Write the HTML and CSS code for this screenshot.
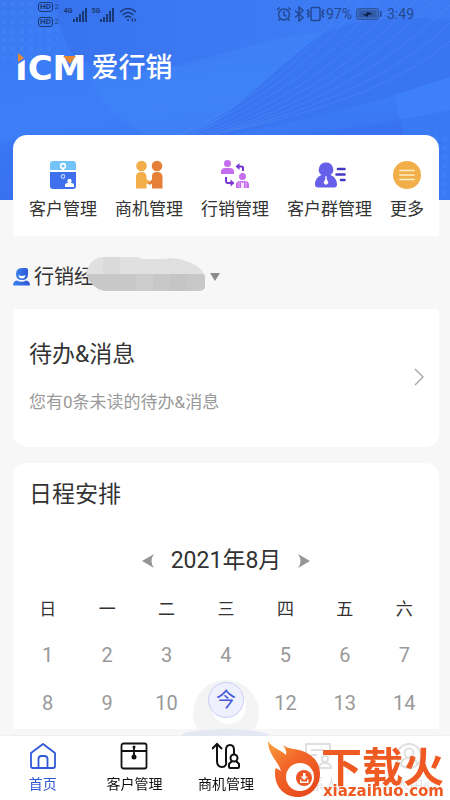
FILE: index.html
```html
<!DOCTYPE html>
<html lang="zh-CN">
<head>
<meta charset="utf-8">
<meta name="viewport" content="width=device-width, initial-scale=1">
<title>爱行销</title>
<link rel="stylesheet" href="styles.css">
</head>
<body>
<div class="app">
  <header class="hero">
    <svg class="hero-art" viewBox="0 0 450 200" preserveAspectRatio="xMidYMid slice" aria-hidden="true">
      <defs>
        <linearGradient id="sky" x1="0" y1="0" x2="0.3" y2="1"><stop offset="0" stop-color="#3a79f2"/><stop offset="0.6" stop-color="#3c7ff7"/><stop offset="1" stop-color="#386ff0"/></linearGradient>
        <linearGradient id="band" x1="0" y1="0" x2="1" y2="0"><stop offset="0" stop-color="#3873ee"/><stop offset="1" stop-color="#3d7cf5"/></linearGradient>
        <pattern id="dots" width="9" height="9" patternUnits="userSpaceOnUse"><circle cx="4" cy="4" r="2" fill="#4b8cf8" opacity=".35"/></pattern>
      </defs>
      <rect width="450" height="200" fill="url(#sky)"/>
      <path d="M50 0H270L322 34C240 60 130 85 76 58C62 42 60 20 50 0Z" fill="url(#band)"/>
      <path d="M90 78C180 76 270 30 322 34C260 80 235 116 165 142C130 130 100 105 90 78Z" fill="#4286f8" opacity=".5"/>
      <path d="M268 0H450V78L394 95C330 116 280 126 190 140C250 100 280 64 322 34Z" fill="#3975f1"/>
      <path d="M322 34C350 20 400 15 450 20V0H268Z" fill="#3e7df5" opacity=".7"/>
      <path d="M394 95L450 77V200H420Z" fill="#3d80f7"/>
      <path d="M0 145C80 115 170 170 450 110V200H0Z" fill="#386ef0" opacity=".4"/>
      <g fill="none" stroke="#78a5fb" stroke-width="1" opacity=".22">
        <path d="M165 142C270 95 310 50 350 0"/><path d="M173 140C278 96 320 50 364 0"/><path d="M181 139C286 98 334 52 380 0"/><path d="M190 138C296 100 348 54 398 0"/><path d="M199 137C306 101 362 55 416 0"/><path d="M208 136C316 102 376 57 434 0"/><path d="M217 134C326 103 392 60 450 5"/><path d="M226 132C336 104 402 68 450 23"/><path d="M235 130C346 105 408 77 450 41"/>
      </g>
      <rect width="58" height="58" fill="url(#dots)"/>
      <rect x="426" y="130" width="24" height="70" fill="url(#dots)"/>
    </svg>

    <div class="status">
      <div class="status-side">
        <div class="hd-stack"><span class="hd"><b>HD</b>2</span><span class="hd"><b>HD</b>2</span></div>
        <div class="signal"><span class="gen">4G</span>
          <svg width="15" height="15" viewBox="0 0 15 15"><path d="M0 12h2v3H0zM3 10h2v5H3zM6 7h2v8H6zM9 4h2v11H9zM12 1h2v14h-2z" fill="#193976"/></svg></div>
        <div class="signal"><span class="gen">5G</span>
          <svg width="15" height="15" viewBox="0 0 15 15"><path d="M0 12h2v3H0zM3 10h2v5H3zM6 7h2v8H6zM9 4h2v11H9zM12 1h2v14h-2z" fill="#193976"/></svg></div>
        <svg class="wifi" width="18" height="15" viewBox="0 0 18 15" fill="none" stroke="#193976" stroke-width="1.6"><path d="M1 5Q9-2 17 5M3.500 8Q9 3 14.500 8M6 10.500Q9 8 12 10.500"/><circle cx="9" cy="13" r="1" fill="#193976" stroke="none"/><path d="M12 13l2-2v4zM17.500 13l-2-2v4z" fill="#193976" stroke="none"/></svg>
      </div>
      <div class="status-side status-right">
        <svg width="16" height="16" viewBox="0 0 16 16" fill="none" stroke="#234890" stroke-width="1.500"><circle cx="8" cy="8.500" r="5.500"/><path d="M8 5v4l2.500 1.500M1 4l3-2.500M15 4l-3-2.500M4 13l-1.500 1.500M12 13l1.500 1.500"/></svg>
        <svg width="12" height="16" viewBox="0 0 12 16" fill="none" stroke="#234890" stroke-width="1.500"><path d="M2 4.500l8 7-4 3.500V1l4 3.500-8 7"/></svg>
        <svg width="19" height="16" viewBox="0 0 19 16" fill="none" stroke="#234890" stroke-width="1.500"><rect x="5" y="1.500" width="9" height="13" rx="1"/><path d="M2.500 3.500l-1 1.500 1.500 1.500-1.500 1.500 1.500 1.500-1.500 2M16.500 3.500l1 1.500-1.500 1.500 1.500 1.500-1.500 1.500 1.500 2"/></svg>
        <span class="percent">97%</span>
        <svg class="battery" width="26" height="13" viewBox="0 0 26 13"><rect x=".5" y=".5" width="22" height="11" rx="2" fill="#3c6cc6" stroke="#2c559f"/><rect x="2.500" y="2.500" width="18" height="7" fill="#315ba9"/><path d="M24 3h1.500v6H24z" fill="#234890"/><path d="M6.500 6.500l4.500-1V3.500l6 2.500-5 1v2z" fill="#0d244e"/></svg>
        <time>3:49</time>
      </div>
    </div>

    <h1 class="brand">
      <span class="brand-mark">ICM
        <svg viewBox="0 0 72 30" width="72" height="30" aria-hidden="true"><path d="M0 2h11v6L3 13H0z" fill="#3c7df6"/><path d="M3 2l6 5-6 4z" fill="#e6882f"/><path d="M48 5h13l-6 8z" fill="#e6882f"/></svg>
      </span>
      <span class="brand-name">爱行销</span>
    </h1>
  </header>

  <main class="content">
    <nav class="quick" aria-label="快捷入口">
      <a href="#customers"><svg width="32" height="32" viewBox="0 0 32 32"><path d="M5 2h20q3 0 3 3v6H2V5q0-3 3-3z" transform="translate(1)" fill="#72c3f8"/><path d="M3 13h26v14q0 3-3 3H6q-3 0-3-3z" fill="#3e70ee"/><circle cx="16" cy="7" r="2.400" fill="none" stroke="#fff" stroke-width="1.600"/><path d="M15 9h2v3h-2z" fill="#fff"/><circle cx="16" cy="17.500" r="1.800" fill="none" stroke="#bcd2ff" stroke-width="1.200"/><circle cx="22.500" cy="22" r="2.200" fill="#fff"/><path d="M18 28v-2q0-2 2.500-2h4q2.500 0 2.500 2v2z" fill="#fff"/></svg><span>客户管理</span></a>
      <a href="#chances"><svg width="32" height="32" viewBox="0 0 32 32"><circle cx="8.500" cy="7" r="5.300" fill="#f3ae49"/><circle cx="24" cy="7" r="5.300" fill="#e67f38"/><path d="M3 29.500V18q0-5 5.500-5 5 0 5 5v2l4 3-2 2.500-2-1v5z" fill="#f3ae49"/><path d="M29.500 29.500V18q0-5-5.500-5t-5 5v2.500L15 24l2 2 2-1.500v5z" fill="#e67f38"/></svg><span>商机管理</span></a>
      <a href="#sales"><svg width="32" height="32" viewBox="0 0 32 32"><g fill="#c56df0"><circle cx="8.500" cy="4.500" r="3.500"/><path d="M2 15v-2q0-4 4-4h5q4 0 4 4v2z"/><circle cx="23.500" cy="17.500" r="3.500"/><path d="M17 29v-3q0-4 4-4h5q4 0 4 4v3z"/></g><path d="M22 22.500l1.500 2 1.500-2V29h-3z" fill="#f7e5fc"/><path d="M20 22.500V29M27 22.500V29" stroke="#e5c2f5" stroke-width=".8"/><g fill="none" stroke="#7735d4" stroke-width="2"><path d="M24 12V8.500q0-1-2-1h-3M7 18v4q0 2 2 2h4"/></g><path d="M16.500 7.500l4-3.500v7zM15.500 24l-4-3.500v7z" fill="#7735d4"/></svg><span>行销管理</span></a>
      <a href="#groups"><svg width="32" height="32" viewBox="0 0 32 32"><path d="M12 3.500a7 7 0 0 1 4.500 12.500c4 1.500 6.500 5 6.500 9.500q0 3-3 3h-16q-3 0-3-3c0-4.500 2.500-8 6.500-9.500A7 7 0 0 1 12 3.500z" fill="#655fe9"/><path d="M11 17.500h2l-.5 2 2 4.500-2.500 2-2.500-2 2-4.500z" fill="#fff"/><path d="M24 10h6.500M22.500 15.500H30.500M27 21h3.500" stroke="#4238c6" stroke-width="2.600" stroke-linecap="round"/></svg><span>客户群管理</span></a>
      <a href="#more"><svg width="32" height="32" viewBox="0 0 32 32"><circle cx="16" cy="16" r="14" fill="#f2ae49"/><path d="M9 11.500h14M9 16h14M9 20.500h14" stroke="#fff0c8" stroke-width="1.700" stroke-linecap="round"/></svg><span>更多</span></a>
    </nav>

    <button class="account" type="button" aria-label="切换行销经理">
      <svg width="18" height="18" viewBox="0 0 18 18" aria-hidden="true"><defs><linearGradient id="u"><stop stop-color="#3b82ee"/><stop offset="1" stop-color="#2d57d8"/></linearGradient></defs><path d="M9 0h4q2 0 2 2v4q0 6-6 6T3 6t6-6z" fill="url(#u)"/><path d="M5.500 7q3.500 2 7 0-.5 3.500-3.500 3.500T5.500 7z" fill="#fff"/><path d="M0 17.500q0-4.500 4-5 5 2.500 9 0 4 .5 4 5z" fill="url(#u)"/></svg>
      <span class="account-name">行销经</span>
      <svg class="mask" width="119" height="34" viewBox="0 0 119 34" aria-hidden="true"><defs><clipPath id="blob"><path d="M0 17Q4 0 18 0H52L57 2H79L83 1 93 2 100 4Q116 9 119 19V31Q117 34 112 34H18Q5 31 0 17z"/></clipPath></defs><g clip-path="url(#blob)"><path d="M0 0h119v17H0z" fill="#e0e0e0"/><path d="M17 0h17v17H17z" fill="#dadada"/><path d="M0 17h119v17H0z" fill="#c8c8c8"/><path d="M50 17h17v17H50z" fill="#cdcdcd"/><path d="M84 17h17v17H84z" fill="#c5c5c5"/></g></svg>
      <svg class="caret" width="10" height="8" viewBox="0 0 10 8" aria-hidden="true"><path d="M0 0h10L5 8z" fill="#8c8c8c"/></svg>
    </button>

    <a class="card todo" href="#todo">
      <span class="todo-text">
        <strong>待办&amp;消息</strong>
        <small>您有0条未读的待办&amp;消息</small>
      </span>
      <svg width="12" height="18" viewBox="0 0 12 18" fill="none" stroke="#a5a5a5" stroke-width="1.400" aria-hidden="true"><path d="M2 1l8 8-8 8"/></svg>
    </a>

    <section class="card calendar">
      <h2>日程安排</h2>
      <div class="month">
        <button type="button" aria-label="上个月"><svg width="12" height="16" viewBox="0 0 12 16"><path d="M12 1L0 8l12 7q-5-7 0-14z" fill="#969696"/></svg></button>
        <span>2021年8月</span>
        <button type="button" aria-label="下个月"><svg width="12" height="16" viewBox="0 0 12 16"><path d="M0 1l12 7-12 7q5-7 0-14z" fill="#969696"/></svg></button>
      </div>
      <table>
        <thead><tr><th>日</th><th>一</th><th>二</th><th>三</th><th>四</th><th>五</th><th>六</th></tr></thead>
        <tbody>
          <tr><td>1</td><td>2</td><td>3</td><td>4</td><td>5</td><td>6</td><td>7</td></tr>
          <tr><td>8</td><td>9</td><td>10</td><td class="today"><span>今</span></td><td>12</td><td>13</td><td>14</td></tr>
        </tbody>
      </table>
    </section>
  </main>

  <nav class="tabs" aria-label="主导航">
    <i class="glow"></i>
    <ul>
      <li><a class="active" href="#home"><svg width="28" height="28" viewBox="0 0 28 28" fill="none" stroke="currentColor" stroke-width="1.800" stroke-linejoin="round"><path d="M2 11L14 2l12 9v13q0 2-2 2H4q-2 0-2-2z"/><path d="M9.500 26v-9q0-3 3-3h3q3 0 3 3v9"/></svg>首页</a></li>
      <li><a href="#customers"><svg width="28" height="28" viewBox="0 0 28 28" fill="none" stroke="currentColor" stroke-width="1.800"><rect x="1.500" y="1.500" width="25" height="25" rx="2"/><path d="M2 9h24M14 5v10"/><circle cx="14" cy="5" r="1.500" fill="currentColor" stroke="none"/><circle cx="14" cy="15" r="2.500" fill="currentColor" stroke="none"/></svg>客户管理</a></li>
      <li><a href="#chances"><svg width="28" height="28" viewBox="0 0 28 28" fill="none" stroke="currentColor" stroke-width="2"><path d="M0 7l5-5 5 5M5 2v17q0 6 5 6t4-6V8q0-5 4-5t4 5v5"/><circle cx="22" cy="16" r="3.500"/><path d="M20 19l-3 3v3q0 1 1 1h8q1 0 1-1v-3l-3-3"/></svg>商机管理</a></li>
      <li class="faded"><a href="#contacts"><svg width="28" height="28" viewBox="0 0 28 28" fill="none" stroke="currentColor" stroke-width="2"><path d="M14 23H2V2h24v12M7 8h13M7 13h6"/><circle cx="21" cy="17" r="3"/><path d="M15 26q0-5 6-5t6 5z"/></svg>联系人</a></li>
      <li class="faded"><a href="#me"><svg width="28" height="28" viewBox="0 0 28 28" fill="none" stroke="currentColor" stroke-width="2"><circle cx="14" cy="14" r="12"/><circle cx="14" cy="11" r="4.500"/><path d="M6 22q1-6 8-6t8 6"/></svg>个人中心</a></li>
    </ul>
    <div class="stamp">
      <svg width="54" height="58" viewBox="0 0 54 58" aria-hidden="true"><defs><linearGradient id="fire" x1="0" y1="0" x2=".7" y2="1"><stop stop-color="#f9a13a"/><stop offset=".45" stop-color="#f3672a"/><stop offset="1" stop-color="#e84a1d"/></linearGradient></defs><path d="M1 1C6 9 13 9 19 15C20 11 18 8 16 5C22 10 31 8 40 13C49 18 53 25 53 34C53 47 43 57 31 57C17 57 8 47 8 33C8 31 8 29 9 28L14 31C12 22 1 15 1 1Z" fill="url(#fire)"/><circle cx="33" cy="37" r="14" fill="#fff"/><circle cx="37" cy="38" r="8" fill="#ec5422"/><path d="M36 33h2.500v3.500H41L37.200 40l-3.700-3.500H36zM33 39.500h1.500v2h5.500v-2h1.500V43H33z" fill="#fff"/></svg>
      <p><b>下载火</b><span>xiazaihuo.com</span></p>
    </div>
  </nav>
</div>
</body>
</html>
```

FILE: styles.css
```css
* { box-sizing: border-box; }

body {
  margin: 0;
  background: #f7f7f7;
  color: #333;
  font-family: Roboto, "Noto Sans CJK SC", sans-serif;
  font-size: 17px;
}

a { color: inherit; text-decoration: none; }
svg { display: block; flex: none; }
button { padding: 0; border: 0; background: none; color: inherit; font: inherit; }

.app { position: relative; min-height: 100vh; }

/* header */
.hero { color: #fff; }
.hero-art { position: absolute; top: 0; left: 0; z-index: -1; width: 100%; height: 200px; }

.status {
  display: flex;
  justify-content: space-between;
  height: 28px;
  padding: 0 36px 0 38px;
  color: #234890;
}
.status-side { display: flex; align-items: center; }
.hd-stack { display: flex; flex-direction: column; gap: 5px; margin-right: 5px; }
.hd { display: flex; align-items: center; gap: 2px; color: #193976; font-size: 7px; line-height: 10px; }
.hd b { padding: 0 1px; border: 1px solid #193976; border-radius: 3px; font-size: 8px; line-height: 8px; }
.signal { display: flex; align-items: flex-end; margin-right: 4px; }
.gen { align-self: flex-start; color: #193976; font-size: 7px; font-weight: 700; line-height: 8px; }
.status-right { font-size: 14px; gap: 1px; }
.battery { margin: 0 4px 0 3px; }

.brand {
  display: flex;
  align-items: center;
  gap: 5px;
  margin: 0;
  padding: 20px 15px 47px;
  line-height: 40px;
}
.brand-mark { position: relative; font: 700 34px/40px "DejaVu Sans", sans-serif; }
.brand-mark svg { position: absolute; top: 3px; left: 0; }
.brand-name { font-size: 27px; font-weight: 500; }

/* content */
.content { padding: 0 11px 71px 13px; }

.quick {
  display: flex;
  justify-content: space-between;
  padding: 24px 15px 15px 16px;
  border-radius: 14px 14px 0 0;
  background: #fff;
}
.quick a { display: flex; flex-direction: column; align-items: center; gap: 6px; line-height: 24px; white-space: nowrap; }

.account { display: flex; align-items: center; padding: 26px 0 17px; line-height: 30px; }
.account-name { margin-left: 3px; font-size: 20px; }
.mask { margin: -8px 5px -2px -8px; }

.card { display: block; border-radius: 14px; background: #fff; }
.todo {
  display: flex;
  align-items: center;
  justify-content: space-between;
  padding: 30px 14px 33px 16px;
  border-radius: 4px 4px 14px 14px;
}
.todo-text { display: flex; flex-direction: column; gap: 19px; }
.todo strong, .calendar h2 { margin: 0; font-size: 23px; font-weight: 400; line-height: 32px; }
.todo small { color: #999; font-size: 17px; line-height: 24px; }

.calendar { margin-top: 16px; padding: 16px 5px 2px; border-radius: 14px 14px 0 0; overflow: hidden; }
.calendar h2 { padding: 0 11px; }
.month { display: flex; align-items: center; justify-content: center; gap: 17px; margin: 34px 0 6px; font-size: 23px; line-height: 32px; }
.calendar table { width: 100%; border-collapse: collapse; table-layout: fixed; }
.calendar th, .calendar td { height: 48px; padding: 0; text-align: center; }
.calendar th { font-size: 17px; font-weight: 400; }
.calendar td { color: #999; font-size: 20px; }
.calendar .today { position: relative; }
.today::before {
  content: "";
  position: absolute;
  top: 1px;
  left: 50%;
  width: 66px;
  height: 66px;
  margin-left: -33px;
  border-radius: 50%;
  background: radial-gradient(circle at 54% 40%, #fff 17px, #f4f4f4 18px);
}
.today span {
  position: relative;
  display: block;
  width: 36px;
  margin: -6px auto 0;
  border: 1px solid #c9cdf5;
  border-radius: 50%;
  background: #eef0fe;
  color: #4359d8;
  line-height: 34px;
}

/* bottom navigation */
.tabs {
  position: fixed;
  right: 0;
  bottom: 0;
  left: 0;
  background: #fff;
  box-shadow: 0 -1px 1px #f0f0f0;
}
.tabs ul { display: flex; margin: 0 -5px 0 -3px; padding: 6px 0 5px; list-style: none; }
.tabs li { flex: 1; }
.tabs a { display: flex; flex-direction: column; align-items: center; gap: 4px; color: #111; font-size: 14px; line-height: 21px; }
.tabs .active { color: #3158d6; }
.faded { opacity: .13; }
.glow {
  position: absolute;
  top: -7px;
  left: 50%;
  width: 88px;
  height: 7px;
  margin-left: -44px;
  border-radius: 50% 50% 0 0 / 100% 100% 0 0;
  background: #e3e8f3;
}
.stamp { position: absolute; right: 6px; bottom: 2px; display: flex; align-items: flex-end; color: #ee5a22; }
.stamp p { display: flex; flex-direction: column; align-items: flex-end; margin: 0; }
.stamp b { font-size: 41px; font-weight: 700; line-height: 32px; }
.stamp span { font: 700 15px/14px "DejaVu Sans", sans-serif; }
```
